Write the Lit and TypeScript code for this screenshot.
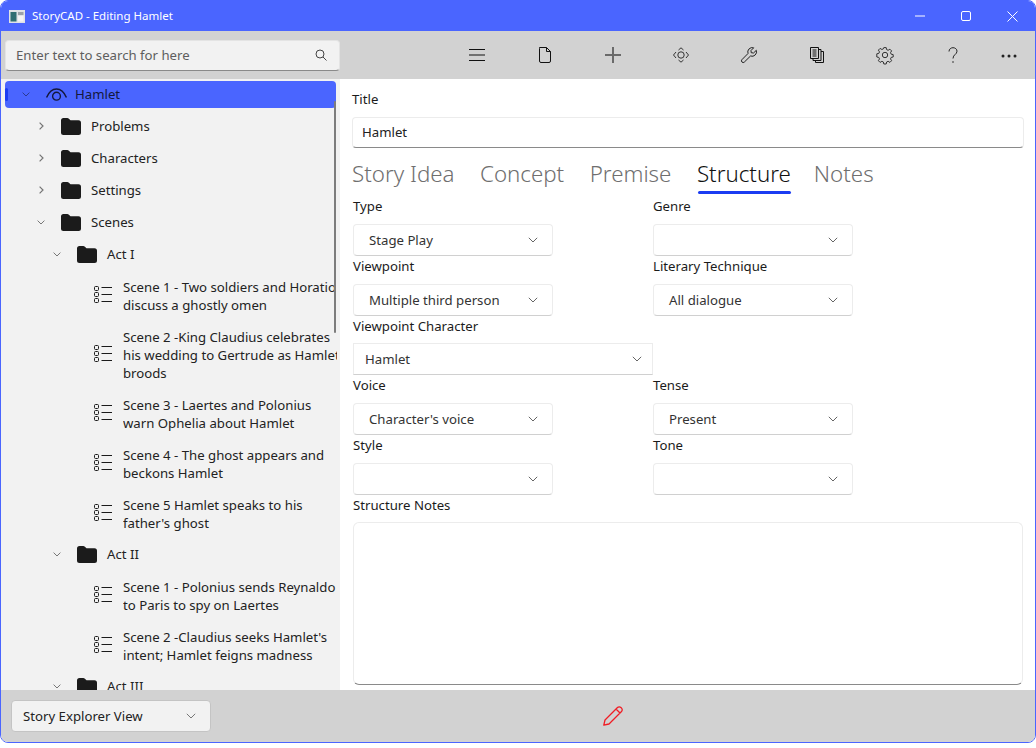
import { LitElement, html, css, svg } from 'lit';
import { customElement } from 'lit/decorators.js';

const chevronDown = html`<svg class="chev" width="10" height="6" viewBox="0 0 10 6"><path d="M.8.8 5 5 9.200.8" fill="none" stroke="currentColor"/></svg>`;
const treeDown = html`<svg class="chev" width="8" height="5" viewBox="0 0 8 5"><path d="M.6.6 4 4 7.400.6" fill="none" stroke="currentColor"/></svg>`;
const treeRight = html`<svg class="chev" width="5" height="8" viewBox="0 0 5 8"><path d="M.6.6 4 4 .6 7.400" fill="none" stroke="currentColor" stroke-width="1.200"/></svg>`;

const folder = html`<svg class="folder" width="20" height="17" viewBox="0 0 20 17"><path d="M0 2.500A2.500 2.500 0 0 1 2.500 0h3.700c.7 0 1.200.3 1.700.7L9.500 2.300h8A2.500 2.500 0 0 1 20 4.800v9.700a2.500 2.500 0 0 1-2.500 2.500h-15A2.500 2.500 0 0 1 0 14.500z" fill="#1b1b1b"/></svg>`;

const listIcon = html`<svg class="list" width="19" height="18" viewBox="0 0 19 18" fill="none" stroke="#1b1b1b"><rect x=".5" y=".5" width="4" height="4" rx="1"/><rect x=".5" y="6.500" width="4" height="4" rx="1"/><rect x=".5" y="12.500" width="4" height="4" rx="1"/><path d="M7.500 1.500H18M7.500 8.500H18M7.500 15.500H18" stroke-width="1.200"/></svg>`;

const eye = html`<svg class="eye" width="21" height="13" viewBox="0 0 21 13" fill="none" stroke="#14183c" stroke-width="1.400"><path d="M.6 9.500C3 3.800 6.400 1 10.500 1s7.500 2.800 9.900 8.500"/><circle cx="10.500" cy="8.200" r="3.900"/></svg>`;

const toolIcons = [
  svg`<path d="M0 2.500h16M0 8h16M0 13.500h16" stroke="#111"/>`,
  svg`<path d="M2.500.5h7l4 4v9.500a1.500 1.500 0 0 1-1.500 1.500H4a1.500 1.500 0 0 1-1.500-1.500V1.500zM9.500.5v4h4" stroke="#111" stroke-linejoin="round"/>`,
  svg`<path d="M0 8h16M8 0v16" stroke="#6a6a6a" stroke-width="2"/>`,
  svg`<circle cx="8" cy="8" r="3.200" stroke="#333"/><path d="M3 5 .5 8 3 11M13 5l2.500 3L13 11M5.500 3 8 .8 10.500 3M5.500 13 8 15.200 10.500 13" stroke="#333"/>`,
  svg`<path d="M15.300 3.300 12.500 6 10.200 5.700 10 3.500 12.700.8A4.500 4.500 0 0 0 7 6.500L.9 12.700a1.700 1.700 0 0 0 2.400 2.400L9.500 9a4.500 4.500 0 0 0 5.800-5.700z" stroke="#222" stroke-linejoin="round"/>`,
  svg`<path d="M1.500.5h8v11h-8zM3.500 3h4M3.500 5h4M3.500 7h4M3.500 9h4M9.500 2.500h2.500v11h-8v-2M12 4.500h2.500v11h-8v-2" stroke="#111"/>`,
  svg`<path d="M6.800.6h2.400l.4 2 1.500.7 1.800-1.100 1.700 1.700-1.100 1.800.7 1.500 2 .4v2.400l-2 .4-.7 1.500 1.100 1.800-1.700 1.700-1.800-1.100-1.500.7-.4 2H6.800l-.4-2-1.500-.7-1.800 1.100-1.700-1.700 1.100-1.800-.7-1.500-2-.4V6.800l2-.4.7-1.500-1.100-1.800 1.700-1.700 1.800 1.100 1.500-.7z" stroke="#333"/><circle cx="8" cy="8" r="2.700" stroke="#333"/>`,
  svg`<path d="M4 4.500C4 2 6 .7 8 .7s4 1.300 4 3.500c0 3.300-4 3.300-4 7.300" stroke="#222"/><circle cx="8" cy="15" r=".8" fill="#222"/>`,
  svg`<circle cx="2" cy="9" r="1.500" fill="#222"/><circle cx="8" cy="9" r="1.500" fill="#222"/><circle cx="14" cy="9" r="1.500" fill="#222"/>`,
];

interface TreeRow { level: number; open: boolean; name: string; }

const topRows: TreeRow[] = [
  { level: 1, open: false, name: 'Problems' },
  { level: 1, open: false, name: 'Characters' },
  { level: 1, open: false, name: 'Settings' },
  { level: 1, open: true, name: 'Scenes' },
];

const acts = [
  {
    name: 'Act I',
    scenes: [
      ['Scene 1 - Two soldiers and Horatio', 'discuss a ghostly omen'],
      ['Scene 2 -King Claudius celebrates', 'his wedding to Gertrude as Hamlet', 'broods'],
      ['Scene 3 - Laertes and Polonius', 'warn Ophelia about Hamlet'],
      ['Scene 4 - The ghost appears and', 'beckons Hamlet'],
      ['Scene 5 Hamlet speaks to his', "father's ghost"],
    ],
  },
  {
    name: 'Act II',
    scenes: [
      ['Scene 1 - Polonius sends Reynaldo', 'to Paris to spy on Laertes'],
      ['Scene 2 -Claudius seeks Hamlet\'s', 'intent; Hamlet feigns madness'],
    ],
  },
  { name: 'Act III', scenes: [] as string[][] },
];

const tabs = ['Story Idea', 'Concept', 'Premise', 'Structure', 'Notes'];

@customElement('app-root')
export class AppRoot extends LitElement {
  static styles = css`
    :host {
      display: block;
      width: 1036px;
      height: 748px;
      background: #fff;
      font-family: 'Noto Sans', 'Open Sans', sans-serif;
      font-size: 13.2px;
      color: #222;
    }
    .window {
      box-sizing: border-box;
      width: 1036px;
      height: 743px;
      border: 1px solid #4a65ff;
      border-radius: 8px;
      overflow: hidden;
      display: flex;
      flex-direction: column;
      background: #fff;
    }
    .titlebar {
      height: 30px;
      flex: none;
      background: #4a65ff;
      color: #fff;
      display: flex;
      align-items: center;
      font-size: 11.5px;
    }
    .app-icon { margin: 0 7px 0 8px; }
    .title-text { flex: 1; margin-top: -1px; }
    .winctl {
      width: 46px;
      display: flex;
      justify-content: center;
    }
    .toolbar {
      height: 48px;
      flex: none;
      background: #d2d2d2;
      display: flex;
      align-items: center;
    }
    .search {
      box-sizing: border-box;
      width: 335px;
      height: 31px;
      margin-left: 4px;
      background: #f2f2f2;
      border: 1px solid #e4e4e4;
      border-bottom-color: #8a8a8a;
      border-radius: 4px;
      display: flex;
      align-items: center;
      justify-content: space-between;
      padding: 0 12px 0 10px;
      color: #5e5e5e;
    }
    .tools {
      margin-left: 103px;
      display: flex;
    }
    .tool {
      width: 68px;
      height: 48px;
      display: flex;
      align-items: center;
      justify-content: center;
    }
    .tool:last-child { width: 44px; }
    .main {
      flex: 1;
      min-height: 0;
      display: flex;
    }
    .tree {
      position: relative;
      width: 339px;
      flex: none;
      background: #f2f2f2;
      overflow: hidden;
      padding-top: 2px;
      box-sizing: border-box;
    }
    .scrollbar {
      position: absolute;
      left: 333px;
      top: 22px;
      width: 2px;
      height: 232px;
      background: #7d7d7d;
      border-radius: 1px;
    }
    .root {
      position: relative;
      height: 27px;
      margin: 0 4px 2px 4px;
      background: #4a65ff;
      border-radius: 4px;
      display: flex;
      align-items: center;
      color: #14183c;
    }
    .root::before {
      content: '';
      position: absolute;
      left: 0;
      top: 7px;
      width: 3px;
      height: 13px;
      background: #1b3cf2;
      border-radius: 2px;
    }
    .root .chev { margin-left: 17px; color: #2c3a90; }
    .root span { padding-bottom: 1px; }
    .eye { margin-left: 16px; margin-right: 8px; }
    .row {
      height: 32px;
      display: flex;
      align-items: center;
      white-space: nowrap;
    }
    .chev { color: #777; flex: none; }
    .chev-slot {
      width: 12px;
      flex: none;
      display: flex;
      justify-content: center;
    }
    .row .folder { margin-left: 14px; margin-right: 10px; flex: none; }
    .lv1 { padding-left: 34px; }
    .lv2 { padding-left: 50px; }
    .scenes { margin: 1px 0 -1px; }
    .scene {
      display: flex;
      align-items: center;
      padding: 7px 0 7px 93px;
      white-space: nowrap;
    }
    .scene .list { margin-top: -2px; margin-right: 10px; flex: none; }
    .scene .lines { line-height: 18px; width: 214px; overflow: hidden; }
    .form {
      flex: 1;
      min-width: 0;
      padding: 10px 11px 0 12px;
      box-sizing: border-box;
    }
    .form label {
      display: block;
      height: 20px;
      line-height: 20px;
      color: #1b1b1b;
    }
    .title-input {
      box-sizing: border-box;
      height: 31px;
      margin-top: 8px;
      border: 1px solid #ececec;
      border-bottom-color: #8a8a8a;
      border-radius: 4px;
      display: flex;
      align-items: center;
      padding: 0 0 1px 9px;
    }
    .tabs {
      display: flex;
      height: 48px;
      box-sizing: border-box;
      padding-top: 8px;
    }
    .tab {
      margin-right: 25.500px;
      font-size: 22.300px;
      font-weight: 300;
      line-height: 35px;
      color: #6f6f6f;
    }
    .tab.on { color: #111; margin-right: 23px; }
    .tab i {
      display: block;
      height: 3px;
      margin-left: 1px;
      border-radius: 2px;
    }
    .tab.on i { background: #1b3cf2; }
    .fields {
      margin-left: 1px;
      display: grid;
      grid-template-columns: 300px 300px;
    }
    .field { display: flex; flex-direction: column; }
    .combo {
      box-sizing: border-box;
      width: 200px;
      height: 32px;
      margin-top: 8px;
      border: 1px solid #ececec;
      border-bottom-color: #d0d0d0;
      border-radius: 4px;
      background: #fff;
      display: flex;
      align-items: center;
      justify-content: space-between;
      padding: 0 14px 0 15px;
      color: #333;
    }
    .combo .chev { color: #666; }
    .combo.wide {
      width: 300px;
      margin-top: 7px;
      border-radius: 0;
      padding: 0 10px 0 11px;
    }
    .notes-field { margin-left: 1px; }
    .notes {
      box-sizing: border-box;
      height: 163px;
      margin-top: 7px;
      border: 1px solid #ececec;
      border-bottom-color: #8a8a8a;
      border-radius: 6px;
      width: 670px;
    }
    .bottombar {
      height: 52px;
      flex: none;
      background: #d2d2d2;
      display: flex;
      align-items: center;
    }
    .view-combo {
      box-sizing: border-box;
      width: 200px;
      height: 32px;
      margin: 0 0 0 10px;
      background: #f2f2f2;
      border: 1px solid #c4c4c4;
      border-radius: 4px;
      display: flex;
      align-items: center;
      justify-content: space-between;
      padding: 0 14px 0 11px;
    }
    .pencil { margin-left: 392px; }
  `;

  private combo(label: string, value: string) {
    return html`<div class="field">
      <label>${label}</label>
      <div class="combo"><span>${value}</span>${chevronDown}</div>
    </div>`;
  }

  render() {
    return html`
      <div class="window">
        <div class="titlebar">
          <svg class="app-icon" width="16" height="13" viewBox="0 0 16 13"><rect width="16" height="13" fill="#dfe3e6"/><rect x="1.500" y="2" width="6" height="9.500" fill="#2f6f73"/><rect x="9" y="2" width="5.500" height="3" fill="#9aa2a8"/><rect x="9" y="6" width="5.500" height="5.500" fill="#f4f4f4"/></svg>
          <span class="title-text">StoryCAD - Editing Hamlet</span>
          <span class="winctl"><svg width="10" height="10" viewBox="0 0 10 10"><path d="M0 5h10" stroke="#fff"/></svg></span>
          <span class="winctl"><svg width="10" height="10" viewBox="0 0 10 10"><rect x=".5" y=".5" width="9" height="9" rx="1.500" fill="none" stroke="#fff"/></svg></span>
          <span class="winctl"><svg width="11" height="11" viewBox="0 0 11 11"><path d="M.5.5l10 10M10.500.5l-10 10" stroke="#fff"/></svg></span>
        </div>
        <div class="toolbar">
          <div class="search">
            <span>Enter text to search for here</span>
            <svg width="12" height="12" viewBox="0 0 12 12" fill="none" stroke="#444"><circle cx="5" cy="5" r="4"/><path d="M8 8l3.500 3.500"/></svg>
          </div>
          <div class="tools">
            ${toolIcons.map((p) => html`<div class="tool"><svg width="16" height="16" viewBox="0 0 16 16" fill="none" overflow="visible">${p}</svg></div>`)}
          </div>
        </div>
        <div class="main">
          <div class="tree">
            <div class="root">${treeDown}${eye}<span>Hamlet</span></div>
            ${topRows.map((r) => html`<div class="row lv1"><span class="chev-slot">${r.open ? treeDown : treeRight}</span>${folder}<span>${r.name}</span></div>`)}
            ${acts.map((a) => html`
              <div class="row lv2"><span class="chev-slot">${treeDown}</span>${folder}<span>${a.name}</span></div>
              <div class="scenes">
                ${a.scenes.map((s) => html`<div class="scene">${listIcon}<div class="lines">${s.map((l) => html`<div>${l}</div>`)}</div></div>`)}
              </div>
            `)}
            <div class="scrollbar"></div>
          </div>
          <div class="form">
            <label>Title</label>
            <div class="title-input">Hamlet</div>
            <div class="tabs">
              ${tabs.map((t) => html`<div class="tab ${t === 'Structure' ? 'on' : ''}">${t}<i></i></div>`)}
            </div>
            <div class="fields">
              ${this.combo('Type', 'Stage Play')}
              ${this.combo('Genre', '')}
              ${this.combo('Viewpoint', 'Multiple third person')}
              ${this.combo('Literary Technique', 'All dialogue')}
              <div class="field">
                <label>Viewpoint Character</label>
                <div class="combo wide"><span>Hamlet</span>${chevronDown}</div>
              </div>
              <div></div>
              ${this.combo('Voice', "Character's voice")}
              ${this.combo('Tense', 'Present')}
              ${this.combo('Style', '')}
              ${this.combo('Tone', '')}
            </div>
            <div class="notes-field">
              <label>Structure Notes</label>
              <div class="notes"></div>
            </div>
          </div>
        </div>
        <div class="bottombar">
          <div class="view-combo"><span>Story Explorer View</span>${chevronDown}</div>
          <svg class="pencil" width="20" height="20" viewBox="0 0 20 20" fill="none" stroke="#f01c24" stroke-width="1.300" stroke-linejoin="round"><path d="M.8 19.200 2 14 14.500 1.500a2.400 2.400 0 0 1 3.400 0l.6.600a2.400 2.400 0 0 1 0 3.400L6 18z M.8 19.200 6 18M13 3l4 4"/></svg>
        </div>
      </div>
    `;
  }
}
